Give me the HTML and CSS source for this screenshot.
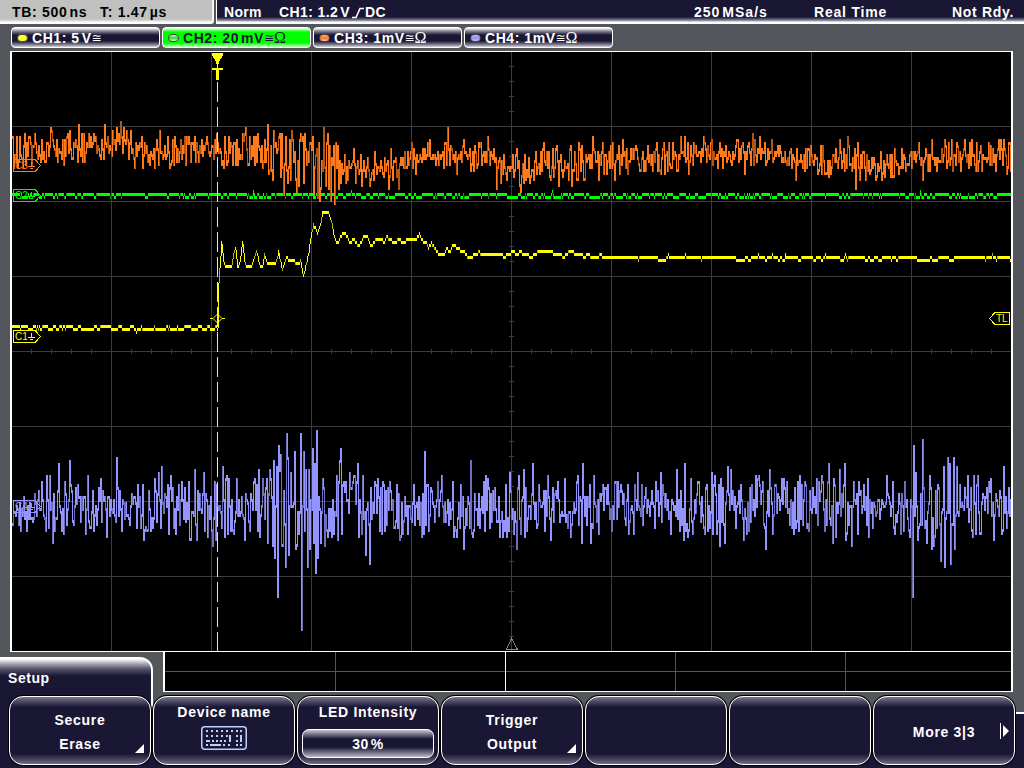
FILE: index.html
```
<!DOCTYPE html>
<html>
<head>
    <meta charset="utf-8">
    <title>Oscilloscope</title>
    <link rel="stylesheet" href="styles.css">
</head>
<body>
    <header class="topbar">
        <div class="timebase"><span class="tb">TB: 500<i></i>ns</span><span>T: 1.47<i></i>µs</span></div>
        <div class="status">
            <span class="norm">Norm</span>
            <span class="trig">CH1: 1.2<i></i>V<svg class="slope" width="12" height="12"><path d="M0 10.5H4L8 1.5H12"/></svg>DC</span>
            <span class="rate">250<i></i>MSa/s</span>
            <span class="mode">Real Time</span>
            <span class="ready">Not Rdy.</span>
        </div>
    </header>

    <div class="channels">
        <div class="channel ch1"><b class="led"></b><span>CH1: 5<i></i>V</span><em>≅</em></div>
        <div class="channel ch2"><b class="led"></b><span>CH2: 20<i></i>mV</span><em>≅</em><em class="ohm">Ω</em></div>
        <div class="channel ch3"><b class="led"></b><span>CH3: 1mV</span><em>≅</em><em class="ohm">Ω</em></div>
        <div class="channel ch4"><b class="led"></b><span>CH4: 1mV</span><em>≅</em><em class="ohm">Ω</em></div>
    </div>

    <svg class="scope" viewBox="12 52 999 599" shape-rendering="crispEdges">
        <path class="grid" id="grid"/>
        <path class="center-mark" d="M511.5 638.5L506.5 649.5H517.5Z"/>
        <path class="trace c4" id="c4"/><path class="trace c4 dim" id="c4dim"/>
        <path class="trace c2" id="c2"/><path class="trace c2 dim" id="c2dim"/>
        <path class="trace c3" id="c3"/><path class="trace c3 dim" id="c3dim"/>
        <path class="trace c1" id="c1"/><path class="trace c1 dim" id="c1dim"/>
        <path class="trigger-line" d="M217.5 82V651"/>
        <path class="trigger-flag" d="M212 53H223V55L219 62V64H218V68H223V70H219V80H216V70H212V68H217V64H216V62L212 55Z"/>
        <path class="tag c1" shape-rendering="auto" d="M210 318.5H213L217.5 314L222 318.5L217.5 323L213 318.5M222 318.5H225"/>
        <g class="tag c3" transform="translate(13 159)"><path d="M.5.5H22L27.5 6.5L22 12.5H.5ZM18.5 3V7M15 7.5H22M17 9.5H20"/><text x="2" y="10">C3</text></g>
        <g class="tag c2" transform="translate(13 189)"><path d="M.5.5H22L27.5 6.5L22 12.5H.5ZM18.5 3V7M15 7.5H22M17 9.5H20"/><text x="2" y="10">C2</text></g>
        <g class="tag c1" transform="translate(13 330)"><path d="M.5.5H22L27.5 6.5L22 12.5H.5ZM18.5 3V7M15 7.5H22M17 9.5H20"/><text x="2" y="10">C1</text></g>
        <g class="tag c4" transform="translate(13 500)"><path d="M.5.5H22L27.5 6.5L22 12.5H.5ZM18.5 3V7M15 7.5H22M17 9.5H20"/><text x="2" y="10">C4</text></g>
        <g class="tag c1" transform="translate(989 312)"><path d="M6 .5H20.5V12.5H6L.5 6.5Z"/><text x="7" y="10">TL</text></g>
    </svg>

    <div class="lower">
        <div class="tab">Setup</div>
        <svg class="overview" viewBox="165 652 846 39" shape-rendering="crispEdges">
            <path d="M165 671.5H1011M335.5 652V691M675.5 652V691M845.5 652V691"/>
            <path class="now" d="M505.5 652V691"/>
        </svg>
    </div>

    <nav class="menu">
        <button class="key">Secure<br>Erase<svg class="corner" width="10" height="10"><path d="M9 0V9H0Z"/></svg></button>
        <button class="key top">Device name
            <svg class="keyboard" width="46" height="24">
                <rect x=".75" y=".75" width="44.5" height="22.5" rx="3"/>
                <path stroke-dasharray="2 3" d="M5 5H33M5 10H27M22 19H30"/>
                <path stroke-dasharray="2 2" d="M35 5H41M35 10H38M35 19H41M11 15H27"/>
                <path d="M5 15H9M5 19H7M9 19H20M29 9V16M36 14V16M40 9V16"/>
            </svg>
        </button>
        <button class="key top">LED Intensity<span class="value">30<i></i>%</span></button>
        <button class="key">Trigger<br>Output<svg class="corner" width="10" height="10"><path d="M9 0V9H0Z"/></svg></button>
        <button class="key"></button>
        <button class="key"></button>
        <button class="key">More 3|3<svg class="next" width="10" height="16"><path d="M0 0H1V16H0ZM3 2L9 8L3 14Z"/></svg></button>
    </nav>
    <script src="scope.js"></script>
</body>
</html>
```
FILE: styles.css
```
* {
    box-sizing: border-box;
}
body {
    margin: 0;
    width: 1024px;
    height: 768px;
    overflow: hidden;
    font: bold 14px/16px "Liberation Sans", Arial, sans-serif;
    letter-spacing: 0.55px;
    color: #fff;
    background: linear-gradient(#53565a 712px, #fff 712px, #fff 714px, #1a1735 714px);
}
i {
    display: inline-block;
    width: 2px;
}
.topbar {
    display: flex;
    height: 24px;
    white-space: nowrap;
}
.timebase {
    display: flex;
    width: 214px;
    padding: 4px 0 0 12px;
    margin-right: 2px;
    color: #000;
    background: linear-gradient(#c0c0c0 19px, #ddd 21px, #fff 22px);
    border-right: 2px solid #f4f4f4;
    border-radius: 0 0 3px 0;
    letter-spacing: 0.7px;
}
.tb {
    width: 88px;
}
.status {
    display: flex;
    flex: 1;
    padding: 4px 0 0 7px;
    background: linear-gradient(#1a1735 17px, #55526b 19px, #aaa8b5 21px, #fff 22px);
    border-left: 1px solid #fff;
}
.norm {
    width: 55px;
    letter-spacing: 0.3px;
}
.trig {
    width: 415px;
    letter-spacing: 0.4px;
}
.rate {
    width: 120px;
    letter-spacing: 1px;
}
.mode {
    width: 138px;
    letter-spacing: 0.8px;
}
.ready {
    letter-spacing: 0.7px;
}
.slope {
    margin: 0 1px 0 2px;
    vertical-align: -2px;
}
.slope path {
    fill: none;
    stroke: #fff;
    stroke-width: 1.6;
}
.channels {
    display: flex;
    gap: 2px;
    height: 27px;
    padding: 3px 0 0 11px;
}
.channel {
    display: flex;
    align-items: center;
    width: 149px;
    height: 21px;
    padding-left: 5px;
    border: 1px solid #fff;
    border-radius: 4px;
    background: linear-gradient(#fff 0, #8a889a 3px, #1a1735 7px, #1a1735 13px, #8a889a 17px, #fff 20px);
    white-space: nowrap;
}
.ch2 {
    color: #1a1735;
    background: linear-gradient(#fff 0, #0f0 4px, #0f0 15px, #fff 20px);
}
.channel em {
    font: 12px/16px "DejaVu Sans", sans-serif;
    letter-spacing: 0;
}
.channel .ohm {
    font: 16px/16px "Liberation Serif", serif;
}
.led {
    width: 11px;
    height: 8px;
    margin-right: 4px;
    border: 1px solid #444;
    border-radius: 4px;
}
.ch1 .led {
    background: #ffff30;
}
.ch2 .led {
    background: linear-gradient(#bfb, #4c4 50%, #cfc);
}
.ch3 .led {
    background: linear-gradient(#ffb080, #ff7418 50%, #ffc090);
}
.ch4 .led {
    background: linear-gradient(#b8b8ff, #9090f8 50%, #c0c0ff);
}
.scope {
    display: block;
    width: 1003px;
    height: 601px;
    margin-left: 10px;
    background: #000;
    border: solid #fff;
    border-width: 1px 2px;
}
.grid {
    fill: none;
    stroke: #3c3c3c;
}
.center-mark {
    fill: none;
    stroke: #888;
}
.c1 { stroke: #ff0; }
.c2 { stroke: #0f0; }
.c3 { stroke: #ff7a1c; }
.c4 { stroke: #9494ff; }
.c1.dim { stroke: #b4b400; }
.c2.dim { stroke: #00a800; }
.c3.dim { stroke: #b85410; }
.c4.dim { stroke: #6e6ebe; }
.trace, .tag path, path.tag {
    fill: none;
}
.tag text {
    stroke: none;
    font: 10px "Liberation Sans", Arial, sans-serif;
    letter-spacing: 0;
}
.tag.c1 text { fill: #ff0; }
.tag.c2 text { fill: #0f0; }
.tag.c3 text { fill: #ff7a1c; }
.tag.c4 text { fill: #9494ff; }
.trigger-line {
    stroke: #ff0;
    stroke-dasharray: 20 5;
}
.trigger-flag {
    fill: #ff0;
}
.lower {
    display: flex;
    height: 44px;
}
.tab {
    width: 153px;
    height: 60px;
    margin: 5px 10px 0 0;
    padding: 11px 8px;
    background: linear-gradient(#fff 0, #b5b4c0 4px, #55526b 10px, #1a1735 17px);
    border: solid #fff;
    border-width: 2px 2px 0 0;
    border-radius: 0 13px 0 0;
    flex: none;
}
.overview {
    width: 850px;
    height: 40px;
    background: #000;
    border: solid #fff;
    border-width: 0 2px 1px;
    flex: none;
}
.overview path {
    stroke: #555;
}
.overview .now {
    stroke: #fff;
}
.menu {
    position: relative;
    display: flex;
    gap: 2px;
    padding-left: 9px;
}
.key {
    position: relative;
    width: 142px;
    height: 69px;
    padding: 2px 0 0;
    font: inherit;
    line-height: 24px;
    letter-spacing: 0.7px;
    color: #fff;
    background: linear-gradient(#77758a 0, #1a1735 10px, #1a1735 57px, #77758a 68px);
    border: 1.5px solid #fff;
    border-radius: 14px;
    box-shadow: 0 0 0 1px #000;
}
.key.top {
    display: flex;
    flex-direction: column;
    align-items: center;
    padding: 7px 0 0;
    line-height: 16px;
}
.value {
    width: 132px;
    height: 29px;
    margin-top: 9px;
    line-height: 28px;
    letter-spacing: 0.5px;
    border: 1px solid #fff;
    border-radius: 7px;
    background: linear-gradient(#c8c7d0 0, #1a1735 9px, #1a1735 17px, #c8c7d0 28px);
}
.keyboard {
    margin-top: 6px;
}
.keyboard rect, .keyboard path {
    fill: none;
    stroke: #bcd0ff;
    stroke-width: 1.5;
}
.keyboard path {
    stroke-width: 2;
}
.corner {
    position: absolute;
    right: 5px;
    bottom: 10px;
    fill: #fff;
}
.next {
    position: absolute;
    right: 4px;
    top: 26px;
    fill: #fff;
}
```
FILE: scope.js
```
// small seeded generator so the noise is the same on every load
let seed = 7;
function rnd() {
    seed = (seed * 16807) % 2147483647;
    return seed / 2147483647;
}

function lerp(points, x, k) {
    for (let i = 1; i < points.length; i++) {
        let a = points[i - 1], b = points[i];
        if (x <= b[0]) return a[k] + (b[k] - a[k]) * Math.max(0, (x - a[0]) / (b[0] - a[0]));
    }
    return points[points.length - 1][k];
}

// one vertical bar per column, on a 3px amplitude step
function draw(id, base, value, dimRate, full) {
    let main = "", dim = "", last = null;
    for (let x = 12; x < 1011; x++) {
        let v = base + Math.round((value(x) - base) / 3) * 3;
        let p = last === null ? v : last;
        let top = Math.min(p, v), bottom = Math.max(p, v) + 3;
        if (!full && bottom - top > 3) {
            if (p < v) top += 3;
            else bottom -= 3;
        }
        let bar = `M${x + 0.5} ${top}V${bottom}`;
        if (p !== v && rnd() < dimRate) dim += bar;
        else main += bar;
        last = v;
    }
    document.getElementById(id).setAttribute("d", main);
    document.getElementById(id + "dim").setAttribute("d", dim);
}

// swings round the center line, with the listed peaks on top
function noisy(center, peaks) {
    let map = {}, sign = 1, drift = 0;
    for (let i = 0; i < peaks.length; i += 2) map[peaks[i]] = peaks[i + 1];
    return x => {
        if (map[x]) {
            sign = map[x] > lerp(center, x, 1) ? -1 : 1;
            return map[x] - (sign < 0 ? 3 : 0);
        }
        if (rnd() < 0.65) sign = -sign;
        drift = drift * 0.8 + (rnd() - 0.5) * 0.35;
        let swing = drift + sign * Math.pow(rnd(), 1.4) * 1.2;
        return lerp(center, x, 1) + swing * lerp(center, x, 2);
    };
}

// graticule
let g = "";
for (let x = 111; x < 1011; x += 100) g += `M${x + 0.5} 52V651`;
for (let y = 126; y < 651; y += 75) g += `M12 ${y + 0.5}H1011`;
for (let x = 31; x < 1011; x += 20) g += `M${x + 0.5} 349V354`;
for (let y = 66; y < 651; y += 15) g += `M509 ${y + 0.5}H514`;
document.getElementById("grid").setAttribute("d", g);

draw("c4", 505, noisy(
    [[12, 505, 14], [40, 505, 20], [140, 504, 22], [250, 506, 26], [265, 505, 36], [320, 505, 36], [345, 505, 25],
     [550, 505, 22], [700, 505, 23], [860, 505, 22], [880, 505, 12], [900, 505, 28], [950, 505, 32], [965, 504, 18], [1011, 505, 23]],
    [12,526, 32,523, 41,481, 46,475, 48,529, 49,475, 52,544, 58,463, 64,481, 69,460, 73,526, 77,484, 85,535, 87,475,
     90,529, 100,478, 106,538, 116,457, 136,529, 137,484, 143,541, 152,529, 154,478, 158,472, 161,466, 168,535, 173,529,
     178,484, 190,541, 194,469, 196,541, 203,472, 204,532, 212,547, 214,481, 215,541, 222,466, 227,535, 228,478, 232,532,
     236,478, 244,541, 254,478, 257,532, 262,478, 267,544, 269,469, 272,547, 274,559, 276,466, 277,598, 278,445, 280,454,
     281,547, 285,568, 286,433, 287,457, 288,556, 294,451, 295,550, 298,535, 300,433, 301,631, 303,451, 305,469, 307,568,
     312,448, 314,463, 315,574, 316,430, 317,559, 320,544, 322,478, 326,532, 331,538, 337,541, 339,460, 340,448, 341,535,
     349,472, 357,463, 362,475, 365,555, 369,565, 377,478, 402,535, 413,484, 424,451, 428,532, 441,475, 456,538, 463,550,
     470,460, 473,532, 487,478, 499,538, 509,472, 516,550, 518,475, 523,469, 524,538, 532,463, 547,475, 550,541, 564,478,
     577,475, 581,544, 582,463, 590,544, 593,475, 611,532, 620,484, 628,535, 637,472, 655,481, 670,535, 676,469, 683,541, 684,463,
     711,472, 712,535, 714,475, 719,547, 720,478, 724,544, 727,466, 730,469, 735,529, 740,484, 743,541, 758,475, 765,550,
     769,469, 781,478, 783,478, 793,535, 804,481, 806,529, 821,475, 824,532, 828,463, 832,544, 833,478, 835,538, 839,469,
     844,463, 845,541, 851,547, 853,481, 857,535, 867,478, 868,538, 872,529, 886,475, 892,481, 893,529, 903,532, 909,538,
     912,598, 913,445, 915,472, 917,541, 922,439, 929,475, 931,550, 933,547, 940,562, 943,466, 944,568, 947,457, 949,463,
     950,565, 953,457, 954,550, 956,466, 967,475, 972,538, 973,475, 977,475, 980,535, 988,481, 993,541, 1001,535, 1003,466]), 0.25, true);

draw("c3", 148, noisy(
    [[12, 149, 13], [60, 148, 13], [100, 142, 13], [125, 141, 12], [150, 149, 13], [200, 149, 13], [255, 148, 15], [280, 156, 24],
     [315, 158, 28], [336, 165, 20], [350, 167, 12], [390, 168, 13], [410, 158, 13], [430, 152, 9], [460, 155, 12], [480, 152, 12],
     [500, 162, 13], [520, 170, 13], [540, 161, 14], [580, 161, 14], [640, 157, 13], [670, 156, 14], [700, 154, 11], [755, 150, 11],
     [780, 152, 8], [800, 158, 12], [850, 159, 15], [880, 165, 11], [930, 157, 12], [1011, 154, 13]],
    [14,157, 18,163, 22,170, 24,133, 31,165, 34,133, 44,163, 50,127, 56,139, 67,134, 77,163, 78,124, 93,133, 104,124, 120,121,
     126,130, 134,168, 142,168, 154,168, 159,130, 178,163, 186,136, 206,136, 209,157, 216,133, 222,162, 228,136, 245,127,
     255,136, 262,169, 267,124, 271,172, 273,130, 278,136, 283,195, 287,183, 290,181, 291,130, 298,187, 299,139, 303,184,
     312,136, 313,196, 317,198, 323,127, 327,133, 330,202, 334,205, 337,145, 345,184, 353,148, 361,187, 369,186, 374,151,
     388,190, 390,148, 398,190, 421,163, 447,127, 456,174, 463,139, 476,169, 478,142, 487,136, 496,190, 500,184, 503,154,
     516,148, 520,193, 536,174, 540,151, 550,180, 556,145, 558,187, 569,148, 571,187, 576,180, 581,145, 592,136, 598,181,
     608,151, 614,181, 622,139, 627,174, 634,148, 640,172, 647,145, 656,142, 668,142, 671,169, 677,172, 680,136, 684,136,
     688,175, 693,142, 703,136, 711,139, 712,166, 719,142, 731,166, 736,139, 744,175, 752,133, 753,165, 759,136, 765,166,
     779,145, 783,163, 795,181, 810,145, 817,175, 822,145, 826,175, 830,175, 839,139, 847,136, 855,190, 859,181, 862,151,
     869,174, 880,151, 881,181, 893,178, 894,148, 901,148, 911,169, 918,142, 922,181, 931,139, 936,172, 944,139, 956,142,
     960,172, 964,139, 968,168, 977,172, 988,142, 995,172, 1000,139, 1006,175]), 0.25, true);

let low = 0;
draw("c2", 193, x => {
    if ([253, 351, 552, 920].includes(x)) return 190;
    if (rnd() < 0.55) low = rnd() < 0.32 ? 3 : 0;
    return 193 + low;
}, 0.4);

let c1 = [[217, 328], [218, 282], [219, 268], [221, 241], [223, 260], [225, 265], [231, 265], [233, 253], [235, 247], [237, 265],
    [239, 262], [242, 241], [244, 258], [246, 265], [251, 265], [254, 256], [256, 250], [260, 266], [262, 264], [264, 254],
    [267, 262], [275, 262], [278, 251], [282, 269], [286, 256], [289, 260], [294, 260], [296, 262], [300, 260], [303, 275],
    [305, 266], [308, 252], [309, 245], [311, 232], [313, 224], [315, 226], [317, 231], [320, 222], [322, 211], [328, 211], [331, 220],
    [333, 232], [337, 242], [342, 232], [345, 232], [348, 238], [350, 242], [353, 238], [358, 245], [364, 234], [367, 235], [371, 245],
    [376, 238], [382, 238], [384, 242], [386, 235], [389, 238], [394, 241], [399, 238], [403, 241], [408, 238], [415, 238], [419, 232],
    [422, 239], [426, 241], [428, 247], [431, 241], [435, 247], [439, 253], [444, 253], [446, 247], [450, 250], [452, 244], [457, 246],
    [461, 250], [464, 250], [468, 256], [476, 253], [478, 250], [481, 253], [502, 253], [504, 256], [507, 253], [513, 250], [516, 253],
    [520, 250], [523, 253], [527, 253], [531, 256], [537, 251], [552, 250], [554, 253], [561, 253], [563, 256], [566, 252], [572, 250],
    [575, 253], [581, 253], [584, 256], [587, 253], [592, 256], [600, 254], [606, 256], [1011, 256]];
let bit = 0;
draw("c1", 256, x => {
    if (x < 217) {
        if (x === 136) return 331;
        if (rnd() < 0.45) bit = rnd() < 0.5 ? 3 : 0;
        return 325 + bit;
    }
    if (x < 606) return lerp(c1, x, 1);
    if ([668, 685, 758, 772, 785, 825, 845, 992].includes(x)) return 253;
    if (rnd() < 0.4) bit = rnd() < (x > 720 ? 0.3 : 0.08) ? 3 : 0;
    return 256 + bit;
}, 0.25);
```
